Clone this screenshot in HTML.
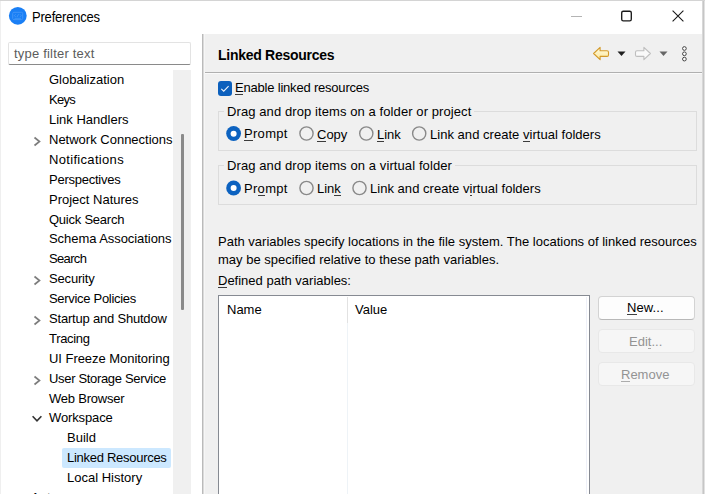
<!DOCTYPE html>
<html><head><meta charset="utf-8">
<style>
*{box-sizing:border-box;margin:0;padding:0}
html,body{width:705px;height:494px;overflow:hidden;background:#fff}
body{position:relative;font-family:"Liberation Sans",sans-serif;font-size:13px;color:#000}
.a{position:absolute;white-space:nowrap}
.t{position:absolute;white-space:nowrap;line-height:15px;height:15px}
u{text-decoration:none;position:relative}
u:after{content:"";position:absolute;left:0;right:0;bottom:0;height:1px;background:currentColor;opacity:.75}
</style></head><body>
<!-- frame -->
<div class="a" style="left:0;top:0;width:705px;height:1px;background:#d4d4d4"></div>
<div class="a" style="left:0;top:1px;width:1px;height:493px;background:#efefef"></div>
<div class="a" style="left:702px;top:1px;width:1px;height:493px;background:#d8d8d8"></div>
<div class="a" style="left:703px;top:1px;width:1px;height:493px;background:#c6c6c6"></div>
<div class="a" style="left:704px;top:1px;width:1px;height:493px;background:#e2e2e2"></div>

<!-- title bar -->
<svg class="a" style="left:0;top:0" width="40" height="32"><circle cx="17.8" cy="15.8" r="8.9" fill="#1a7ff5"/>
<rect x="12.7" y="12.3" width="10" height="7.3" rx="1.2" fill="none" stroke="#3f94f8" stroke-width="1"/>
<path d="M15.6 14.3L14.4 15.6L15.6 16.9M17 17L18.6 14.2M20 14.3L21.2 15.6L20 16.9" fill="none" stroke="#4a9cf9" stroke-width="0.8"/>
<path d="M14.5 18.3H21" stroke="#4196f8" stroke-width="0.9"/></svg>
<div class="t" style="left:32px;top:10px;font-size:13px;letter-spacing:-0.2px;transform:scaleY(1.08);transform-origin:0 11.5px">Preferences</div>
<div class="a" style="left:571px;top:16px;width:11px;height:1px;background:#b4b4b4"></div>
<svg class="a" style="left:600px;top:0" width="50" height="32"><rect x="21.7" y="11.2" width="9.6" height="9.6" rx="1.6" fill="none" stroke="#1a1a1a" stroke-width="1.35"/></svg>
<svg class="a" style="left:671px;top:9px" width="14" height="14" viewBox="0 0 14 14"><path d="M1.6 1.6L12.4 12.4M12.4 1.6L1.6 12.4" stroke="#1a1a1a" stroke-width="1.1"/></svg>

<!-- left panel -->
<div class="a" style="left:8px;top:42px;width:183px;height:23px;border:1px solid #e3e3e3;border-bottom:1px solid #8a8a8a;border-radius:2px;background:#fff"></div>
<div class="t" style="left:14px;top:46px;color:#5c5c5c;letter-spacing:0.2px">type filter text</div>

<div class="a" style="left:173px;top:70px;width:18px;height:424px;background:#f0f0f0"></div>
<div class="a" style="left:181px;top:134px;width:3px;height:176px;background:#8a8a8a;border-radius:1px"></div>

<div class="a" style="left:62px;top:448px;width:109px;height:20px;background:#cce8ff;border-radius:2px"></div>

<div id="tree" class="a" style="left:0;top:0;width:173px;height:494px;overflow:hidden">
<div class="t" style="left:49px;top:72px">Globalization</div>
<div class="t" style="left:49px;top:92px;letter-spacing:-0.7px">Keys</div>
<div class="t" style="left:49px;top:112px">Link Handlers</div>
<div class="t" style="left:49px;top:132px">Network Connections</div>
<div class="t" style="left:49px;top:152px;letter-spacing:0.32px">Notifications</div>
<div class="t" style="left:49px;top:172px;letter-spacing:-0.25px">Perspectives</div>
<div class="t" style="left:49px;top:192px">Project Natures</div>
<div class="t" style="left:49px;top:212px;letter-spacing:-0.24px">Quick Search</div>
<div class="t" style="left:49px;top:231px;letter-spacing:-0.06px">Schema Associations</div>
<div class="t" style="left:49px;top:251px;letter-spacing:-0.66px">Search</div>
<div class="t" style="left:49px;top:271px;letter-spacing:-0.17px">Security</div>
<div class="t" style="left:49px;top:291px;letter-spacing:-0.3px">Service Policies</div>
<div class="t" style="left:49px;top:311px;letter-spacing:-0.2px">Startup and Shutdow</div>
<div class="t" style="left:49px;top:331px;letter-spacing:-0.33px">Tracing</div>
<div class="t" style="left:49px;top:351px;letter-spacing:-0.04px">UI Freeze Monitoring</div>
<div class="t" style="left:49px;top:371px;letter-spacing:-0.33px">User Storage Service</div>
<div class="t" style="left:49px;top:391px;letter-spacing:-0.22px">Web Browser</div>
<div class="t" style="left:49px;top:410px;letter-spacing:-0.12px">Workspace</div>
<div class="t" style="left:67px;top:430px">Build</div>
<div class="t" style="left:67px;top:450px;letter-spacing:-0.28px">Linked Resources</div>
<div class="t" style="left:67px;top:470px">Local History</div>
<div class="t" style="left:31px;top:490px">Ant</div>
<svg class="a" style="left:0;top:0" width="60" height="494">
<g fill="none" stroke="#7c7c7c" stroke-width="1.65">
<path d="M34.5 137.5L39.5 141.5L34.5 145.5"/>
<path d="M34.5 276.5L39.5 280.5L34.5 284.5"/>
<path d="M34.5 316.5L39.5 320.5L34.5 324.5"/>
<path d="M34.5 376.5L39.5 380.5L34.5 384.5"/>
<path d="M32.6 416.3L37 420.9L41.4 416.3" stroke="#333" stroke-width="1.6"/>
</g></svg>
</div>

<!-- right panel -->
<div class="a" style="left:202px;top:34px;width:1px;height:460px;background:#bababa"></div>
<div class="a" style="left:203px;top:34px;width:499px;height:460px;background:#f0f0f0"></div>
<div class="a" style="left:205px;top:72px;width:497px;height:1px;background:#b0b0b0"></div>
<div class="a" style="left:205px;top:73px;width:497px;height:1px;background:#fafafa"></div>
<div class="a" style="left:203px;top:34px;width:1px;height:460px;background:#dadada"></div>
<div class="a" style="left:204px;top:34px;width:1px;height:460px;background:#f6f6f6"></div>
<div class="t" style="left:218px;top:48px;font-weight:bold;font-size:14px;letter-spacing:-0.27px;height:16px;transform:scaleY(1.09);transform-origin:0 12px">Linked Resources</div>

<!-- toolbar icons -->
<svg class="a" style="left:590px;top:42px" width="105" height="24" viewBox="0 0 105 24">
<defs><linearGradient id="ga" x1="0" y1="0" x2="0" y2="1"><stop offset="0" stop-color="#fffbe2"/><stop offset="1" stop-color="#fde89a"/></linearGradient></defs>
<path d="M3.6 11.5L10.1 5.3V8.8H17Q18.5 8.8 18.5 10.3V12.9Q18.5 14.4 17 14.4H10.1V17.7Z" fill="url(#ga)" stroke="#d39a2a" stroke-width="1.1" stroke-linejoin="round"/>
<path d="M27.5 9.5H35.5L31.5 14Z" fill="#1e1e1e"/>
<path d="M60.4 11.5L53.9 5.3V8.8H47Q45.5 8.8 45.5 10.3V12.9Q45.5 14.4 47 14.4H53.9V17.7Z" fill="#f9f9f9" stroke="#bebebe" stroke-width="1.1" stroke-linejoin="round"/>
<path d="M69.5 9.5H77.5L73.5 14Z" fill="#666"/>
<g fill="#fff" stroke="#3a3a3a" stroke-width="0.95"><circle cx="94.4" cy="6.5" r="1.85"/><circle cx="94.4" cy="11.8" r="1.85"/><circle cx="94.4" cy="17.1" r="1.85"/></g>
</svg>

<!-- enable checkbox -->
<div class="a" style="left:218px;top:81px;width:14px;height:15px;border-radius:3px;background:#0c60bd"></div>
<svg class="a" style="left:218px;top:81px" width="14" height="15"><path d="M3.3 7.9L5.7 10.2L10.6 5.1" fill="none" stroke="#f2f6fc" stroke-width="1.05"/></svg>
<div class="t" style="left:235px;top:80px;letter-spacing:-0.2px"><u>E</u>nable linked resources</div>

<!-- group 1 -->
<div class="a" style="left:218px;top:111px;width:479px;height:40px;border:1px solid #dcdcdc"></div>
<div class="t" style="left:224px;top:104px;padding:0 3px;background:#f0f0f0;letter-spacing:0.09px">Drag and drop items on a folder or project</div>
<div class="t" style="left:244px;top:126px;letter-spacing:0.3px"><u>P</u>rompt</div>
<div class="t" style="left:317px;top:127px"><u>C</u>opy</div>
<div class="t" style="left:377px;top:127px"><u>L</u>ink</div>
<div class="t" style="left:430px;top:127px;letter-spacing:0.03px">Link and create <u>v</u>irtual folders</div>

<!-- group 2 -->
<div class="a" style="left:218px;top:165px;width:479px;height:40px;border:1px solid #dcdcdc"></div>
<div class="t" style="left:224px;top:158px;padding:0 3px;background:#f0f0f0;letter-spacing:0.1px">Drag and drop items on a virtual folder</div>
<div class="t" style="left:244px;top:181px;letter-spacing:0.3px">Pr<u>o</u>mpt</div>
<div class="t" style="left:317px;top:181px">Lin<u>k</u></div>
<div class="t" style="left:370px;top:181px;letter-spacing:0.03px">Link and create v<u>i</u>rtual folders</div>

<svg class="a" style="left:0;top:0" width="705" height="494">
<g fill="#0c62c0"><circle cx="233.6" cy="133.5" r="7.4"/><circle cx="233.6" cy="188" r="7.4"/></g>
<g fill="#fff"><circle cx="233.6" cy="133.7" r="3"/><circle cx="233.6" cy="188" r="3"/></g>
<g fill="none" stroke="#898989" stroke-width="1.4">
<circle cx="306.5" cy="133.5" r="6.6"/><circle cx="366.3" cy="133.5" r="6.6"/><circle cx="419.2" cy="133.5" r="6.6"/>
<circle cx="306.5" cy="188" r="6.6"/><circle cx="359.5" cy="188" r="6.6"/>
</g></svg>

<!-- path variables -->
<div class="t" style="left:218px;top:234px">Path variables specify locations in the file system. The locations of linked resources</div>
<div class="t" style="left:218px;top:252px">may be specified relative to these path variables.</div>
<div class="t" style="left:218px;top:273px"><u>D</u>efined path variables:</div>

<!-- table -->
<div class="a" style="left:218px;top:295px;width:372px;height:210px;border:1px solid #868a92;background:#fff"></div>
<div class="a" style="left:347px;top:297px;width:1px;height:197px;background:#eef3f7"></div>
<div class="a" style="left:347px;top:297px;width:1px;height:26px;background:#e2e2e2"></div>
<div class="a" style="left:586px;top:297px;width:1px;height:197px;background:#eef0f8"></div>
<div class="t" style="left:227px;top:302px">Name</div>
<div class="t" style="left:355px;top:302px">Value</div>

<!-- buttons -->
<div class="a" style="left:598px;top:296px;width:97px;height:24px;border:1px solid #d3d3d3;border-bottom-color:#b8b8b8;border-radius:4px;background:#fdfdfd"></div>
<div class="t" style="left:627px;top:300px;letter-spacing:0.1px"><u>N</u>ew...</div>
<div class="a" style="left:598px;top:329px;width:97px;height:24px;border:1px solid #e8e8e8;border-radius:4px;background:#f6f6f6"></div>
<div class="t" style="left:629px;top:334px;color:#939393">Edi<u>t</u>...</div>
<div class="a" style="left:598px;top:362px;width:97px;height:24px;border:1px solid #e8e8e8;border-radius:4px;background:#f6f6f6"></div>
<div class="t" style="left:621px;top:367px;color:#939393"><u>R</u>emove</div>
</body></html>
